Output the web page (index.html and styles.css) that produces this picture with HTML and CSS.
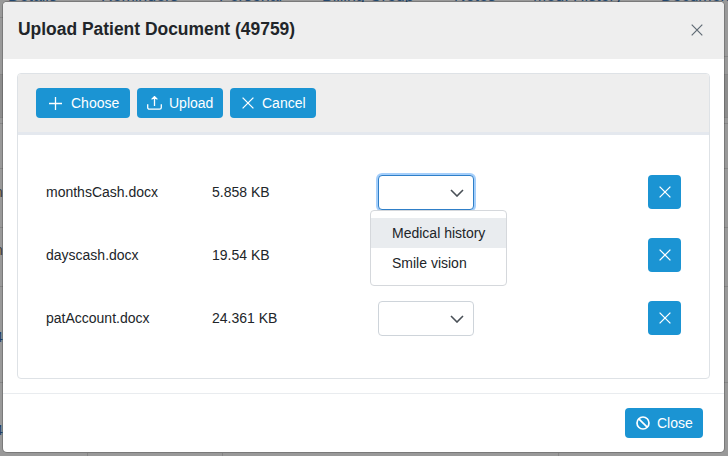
FILE: index.html
```html
<!DOCTYPE html>
<html lang="en">
<head>
<meta charset="utf-8">
<title>Upload Patient Document</title>
<link rel="stylesheet" href="styles.css">
</head>
<body>
<div class="backdrop">
  <div class="bg-row r-top">
    <div class="tabs"><span>Details</span><span>Reminders</span><span>Personal</span><span>Billing Group</span><span>Notes</span><span>Med. History</span><span>Documents</span></div>
  </div>
  <div class="bg-row r-b"></div>
  <div class="bg-row r-c"></div>
  <div class="bg-row r-d"></div>
  <div class="bg-row r-e"></div>
  <div class="bg-row r-f"></div>
  <div class="bg-row r-g"><span class="tail dark">n</span></div>
  <div class="bg-row r-h"><span class="tail dark">n</span></div>
  <div class="bg-row r-i"><span class="tail blue">4</span></div>
  <div class="bg-row r-j"><span class="tail blue">4</span></div>
  <div class="bg-row r-k"></div>
</div>
<section class="modal">
  <header class="modal-header">
    <h1>Upload Patient Document (49759)</h1>
    <svg class="close-x" viewBox="0 0 12 12"><path d="M.7.7l10.6 10.6M11.3.7L.7 11.3"/></svg>
  </header>
  <div class="modal-body">
    <div class="panel">
      <div class="toolbar">
        <button class="btn btn-choose"><svg class="ico ico-plus" viewBox="0 0 13 13"><path d="M6.5 0v13M0 6.5h13"/></svg><span>Choose</span></button>
        <button class="btn btn-upload"><svg class="ico ico-up" viewBox="0 0 15 14"><path d="M7.5 10V.8M4.6 3.4L7.5.6l2.9 2.8M.7 8.2v3.3a1.7 1.7 0 0 0 1.7 1.7h10.2a1.7 1.7 0 0 0 1.7-1.7V8.2"/></svg><span>Upload</span></button>
        <button class="btn btn-cancel"><svg class="ico ico-x" viewBox="0 0 12 12"><path d="M.6.6l10.8 10.8M11.4.6L.6 11.4"/></svg><span>Cancel</span></button>
      </div>
      <div class="files">
        <div class="file-row">
          <span class="name">monthsCash.docx</span><span class="size">5.858 KB</span>
          <div class="select-cell">
            <div class="select focused"><svg viewBox="0 0 14 8"><path d="M1 1l6 6 6-6"/></svg></div>
            <ul class="menu"><li class="hover">Medical history</li><li>Smile vision</li></ul>
          </div>
          <button class="btn square"><svg class="ico ico-x" viewBox="0 0 12 12"><path d="M.6.6l10.8 10.8M11.4.6L.6 11.4"/></svg></button>
        </div>
        <div class="file-row">
          <span class="name">dayscash.docx</span><span class="size">19.54 KB</span>
          <div class="select-cell"><div class="select"><svg viewBox="0 0 14 8"><path d="M1 1l6 6 6-6"/></svg></div></div>
          <button class="btn square"><svg class="ico ico-x" viewBox="0 0 12 12"><path d="M.6.6l10.8 10.8M11.4.6L.6 11.4"/></svg></button>
        </div>
        <div class="file-row">
          <span class="name">patAccount.docx</span><span class="size">24.361 KB</span>
          <div class="select-cell"><div class="select"><svg viewBox="0 0 14 8"><path d="M1 1l6 6 6-6"/></svg></div></div>
          <button class="btn square"><svg class="ico ico-x" viewBox="0 0 12 12"><path d="M.6.6l10.8 10.8M11.4.6L.6 11.4"/></svg></button>
        </div>
      </div>
    </div>
  </div>
  <footer class="modal-footer">
    <button class="btn btn-close"><svg class="ico ico-ban" viewBox="0 0 14 14"><circle cx="7" cy="7" r="6"/><path d="M2.8 2.8l8.4 8.4"/></svg><span>Close</span></button>
  </footer>
</section>
</body>
</html>
```
FILE: styles.css
```css
* { box-sizing: border-box; }
html, body { margin: 0; height: 100%; }
body {
  width: 728px;
  height: 456px;
  overflow: hidden;
  position: relative;
  background: #999;
  font-family: "Liberation Sans", Arial, sans-serif;
  font-size: 14px;
  color: #212529;
}

/* dimmed page behind the dialog */
.backdrop {
  position: absolute;
  inset: 0;
  overflow: hidden;
  display: flex;
  flex-direction: column;
  background: #999;
}
.bg-row { flex: none; border-bottom: 1px solid #868686; font-size: 14px; line-height: 20px; }
.r-top {
  height: 18px;
  border-bottom: 0;
  background: linear-gradient(#868686, #868686) left bottom / 10px 1px no-repeat;
}
.r-b {
  height: 39px;
  border-bottom: 0;
  background: linear-gradient(#868686, #868686) right bottom / 10px 1px no-repeat;
}
.r-c { height: 18px; }
.r-d { height: 43px; background: #8d8d8d; }
.r-e { height: 6px; }
.r-f { height: 45px; }
.r-g { height: 59px; padding-top: 13px; }
.r-h { height: 59px; padding-top: 12px; }
.r-i { height: 96px; padding-top: 40px; }
.r-j { height: 70px; padding-top: 37px; border-bottom: 0; }
.r-k {
  height: 3px;
  border-bottom: 0;
  background:
    linear-gradient(#868686, #868686) 87px 0 / 1px 3px no-repeat,
    linear-gradient(#868686, #868686) 222px 0 / 1px 3px no-repeat,
    linear-gradient(#868686, #868686) 558px 0 / 1px 3px no-repeat;
}
.tail { display: block; margin-left: -5px; }
.tail.dark { color: #3d3a36; }
.tail.blue { color: #1f3f66; }
.tabs {
  display: grid;
  grid-template-columns: 93px 118px 103px 132px 79px 128px auto;
  margin: -12px 0 0 8px;
  font-size: 16px;
  line-height: 16px;
  color: #24486f;
  white-space: nowrap;
}

/* dialog */
.modal {
  position: absolute;
  left: 2px;
  top: 1px;
  width: 723px;
  height: 452px;
  background: #fff;
  border: 1px solid rgba(0, 0, 0, .2);
  background-clip: padding-box;
  border-radius: 5px;
  display: flex;
  flex-direction: column;
}
.modal-header {
  height: 57px;
  flex: none;
  background: #eeeeee;
  border-radius: 4px 4px 0 0;
  display: flex;
  align-items: center;
  justify-content: space-between;
  padding: 0 21px 3px 15px;
}
.modal-header h1 {
  margin: 0;
  font-size: 17.44px;
  font-weight: 700;
  line-height: 20px;
}
.close-x { width: 12px; height: 12px; margin-top: 1px; }
.close-x path { fill: none; stroke: #5f6a74; stroke-width: 1.2; }
.modal-body { flex: 1; min-height: 0; padding: 14px; }
.panel {
  height: 100%;
  border: 1px solid #dee2e6;
  border-radius: 4px;
}
.toolbar {
  height: 61px;
  background: #eeeeee;
  border-bottom: 3px solid #e4e8ee;
  border-radius: 3px 3px 0 0;
  display: flex;
  align-items: center;
  gap: 7px;
  padding: 0 18px;
}

/* buttons */
.btn {
  height: 30px;
  border: 0;
  border-radius: 4px;
  background: #1b94d3;
  color: #fff;
  font: 14px/16px "Liberation Sans", Arial, sans-serif;
  display: inline-flex;
  align-items: center;
  padding: 0;
}
.ico { flex: none; }
.ico path, .ico circle { fill: none; stroke: #fff; stroke-width: 1.3; }
.btn-choose { width: 94px; padding-left: 13px; gap: 9px; }
.btn-upload { width: 86px; padding-left: 10px; gap: 7px; }
.btn-cancel { width: 86px; padding-left: 12px; gap: 8px; }
.btn-close { width: 78px; padding-left: 11px; gap: 7px; }
.ico-plus { width: 13px; height: 13px; }
.ico-up { width: 15px; height: 14px; margin-top: -1px; }
.ico-x { width: 12px; height: 12px; }
.ico-ban { width: 14px; height: 14px; }
.ico-ban circle, .ico-ban path { stroke-width: 1.7; }
.btn.square { width: 33px; height: 34px; justify-content: center; flex: none; }

/* file rows */
.files { padding: 25px 28px 0; }
.file-row {
  display: flex;
  align-items: center;
  height: 63px;
  padding-top: 1px;
}
.name { width: 166px; }
.size { width: 166px; }
.select-cell { width: 270px; position: relative; height: 34px; }
.select {
  width: 96px;
  height: 35px;
  border: 1px solid #ced4da;
  border-radius: 4px;
  display: flex;
  align-items: center;
  justify-content: flex-end;
  padding-right: 9px;
  background: #fff;
}
.select svg { width: 14px; height: 8px; }
.select path { fill: none; stroke: #495057; stroke-width: 1.6; }
.select.focused { border-color: #2f7fc8; box-shadow: 0 0 0 2px #a5cffb; }
.menu {
  position: absolute;
  left: -8px;
  top: 35px;
  width: 137px;
  height: 76px;
  margin: 0;
  padding: 7px 0 0;
  list-style: none;
  background: #fff;
  border: 1px solid #d5d8dc;
  border-radius: 4px;
  z-index: 2;
}
.menu li { height: 30px; line-height: 30px; padding-left: 21px; }
.menu li.hover { background: #e9ecef; }

.modal-footer {
  height: 59px;
  flex: none;
  border-top: 1px solid #e9ecef;
  display: flex;
  align-items: center;
  justify-content: flex-end;
  padding-right: 21px;
}
```
